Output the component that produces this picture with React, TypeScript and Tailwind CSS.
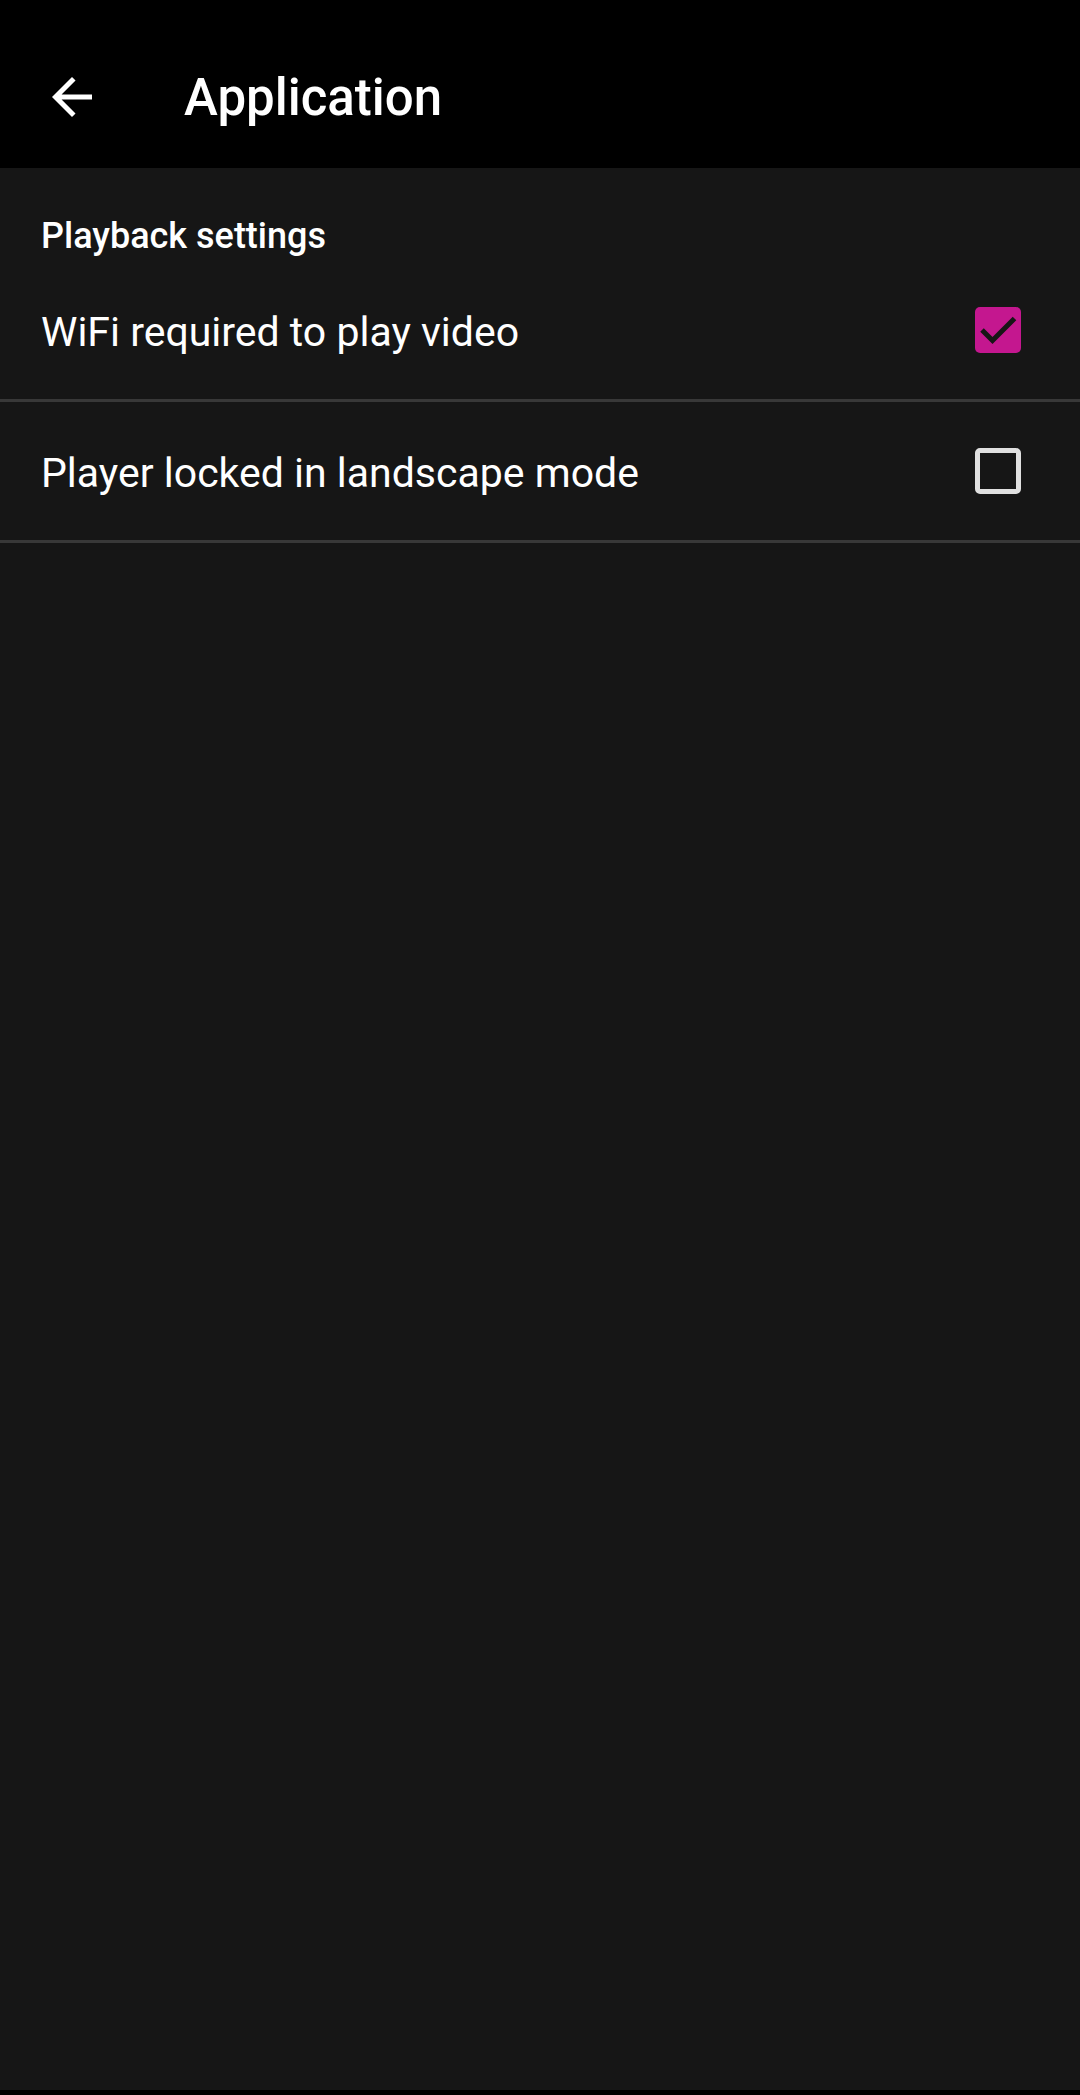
import { useState } from "react"

const settings = [
  { id: "wifi", label: "WiFi required to play video", checked: true },
  { id: "landscape", label: "Player locked in landscape mode", checked: false },
]

function Checkbox({ checked, onClick }: { checked: boolean; onClick: () => void }) {
  if (checked) {
    return (
      <button onClick={onClick} className="w-[46px] h-[46px] rounded-[5px] bg-[#c4178f] flex items-center justify-center">
        <svg width="46" height="46" viewBox="0 0 46 46">
          <path d="M7 23 L17.5 33.5 L39.5 11.5" fill="none" stroke="#161616" strokeWidth="5" />
        </svg>
      </button>
    )
  }
  return <button onClick={onClick} className="w-[46px] h-[46px] rounded-[5px] border-[5px] border-[#e0e0e0]" />
}

export default function App() {
  const [values, setValues] = useState<Record<string, boolean>>(
    Object.fromEntries(settings.map((s) => [s.id, s.checked])),
  )

  return (
    <div className="min-h-[2095px] bg-[#161616] flex flex-col font-['Roboto',sans-serif] text-white">
      {/* Toolbar */}
      <div className="h-[168px] bg-black pt-[26px] pl-[42px] flex items-center">
        <svg width="60" height="60" viewBox="0 0 24 24" fill="#ffffff">
          <path d="M20 11H7.83l5.59-5.59L12 4l-8 8 8 8 1.41-1.41L7.83 13H20v-2z" />
        </svg>
        <h1 className="ml-[82px] text-[51px] font-medium leading-none">Application</h1>
      </div>

      {/* Category */}
      <div className="pt-[48px] pl-[41px] text-[36px] font-medium leading-[40px]">Playback settings</div>

      {/* Rows */}
      <div className="mt-[5px]">
        {settings.map((s) => (
          <div key={s.id} className="h-[141px] border-b-[3px] border-[#383838] flex items-center justify-between pl-[41px] pr-[59px]">
            <span className="mt-[5px] text-[41px] leading-none">{s.label}</span>
            <Checkbox checked={values[s.id]} onClick={() => setValues({ ...values, [s.id]: !values[s.id] })} />
          </div>
        ))}
      </div>

      <div className="flex-1" />
      <div className="h-[5px] bg-black" />
    </div>
  )
}
